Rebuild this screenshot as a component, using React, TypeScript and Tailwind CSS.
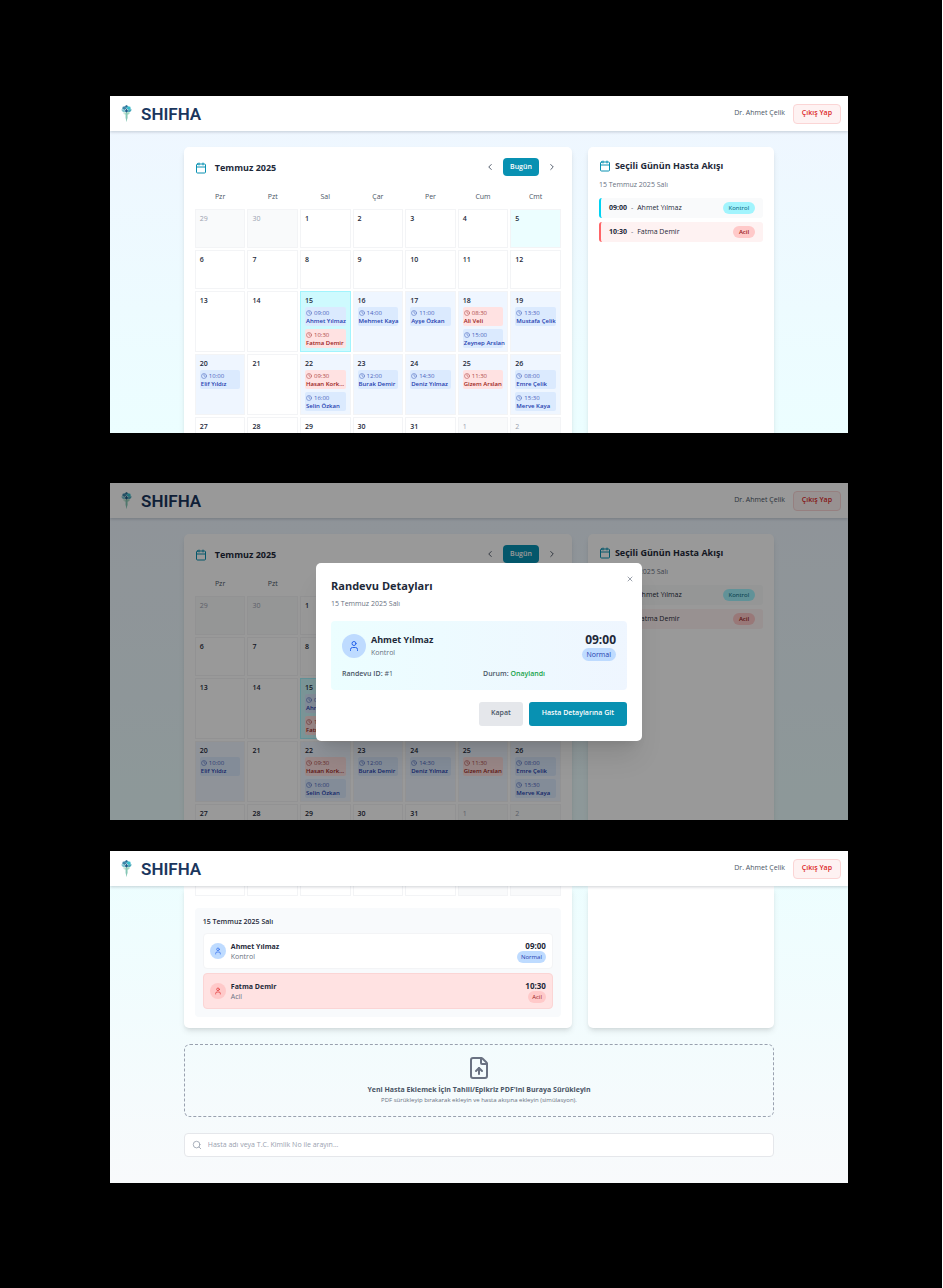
import React from 'react';
import { Calendar as CalendarIcon, ChevronLeft, ChevronRight, Clock, FileUp, Search, User, X } from 'lucide-react';

type Visit = { time: string; name: string; urgent?: boolean };
type Day = { label: string; outside?: boolean; today?: boolean; selected?: boolean; visits?: Visit[] };

const weekdays = ['Pzr', 'Pzt', 'Sal', 'Çar', 'Per', 'Cum', 'Cmt'];

const plain = (...labels: string[]): Day[] => labels.map((label) => ({ label }));

const weeks: { height: string; days: Day[] }[] = [
  {
    height: 'h-[39px]',
    days: [
      { label: '29', outside: true },
      { label: '30', outside: true },
      ...plain('1', '2', '3', '4'),
      { label: '5', today: true },
    ],
  },
  { height: 'h-[39px]', days: plain('6', '7', '8', '9', '10', '11', '12') },
  {
    height: 'h-[61px]',
    days: [
      ...plain('13', '14'),
      {
        label: '15',
        selected: true,
        visits: [
          { time: '09:00', name: 'Ahmet Yılmaz' },
          { time: '10:30', name: 'Fatma Demir', urgent: true },
        ],
      },
      { label: '16', visits: [{ time: '14:00', name: 'Mehmet Kaya' }] },
      { label: '17', visits: [{ time: '11:00', name: 'Ayşe Özkan' }] },
      {
        label: '18',
        visits: [
          { time: '08:30', name: 'Ali Veli', urgent: true },
          { time: '15:00', name: 'Zeynep Arslan' },
        ],
      },
      { label: '19', visits: [{ time: '13:30', name: 'Mustafa Çelik' }] },
    ],
  },
  {
    height: 'h-[61px]',
    days: [
      { label: '20', visits: [{ time: '10:00', name: 'Elif Yıldız' }] },
      { label: '21' },
      {
        label: '22',
        visits: [
          { time: '09:30', name: 'Hasan Kork...', urgent: true },
          { time: '16:00', name: 'Selin Özkan' },
        ],
      },
      { label: '23', visits: [{ time: '12:00', name: 'Burak Demir' }] },
      { label: '24', visits: [{ time: '14:30', name: 'Deniz Yılmaz' }] },
      { label: '25', visits: [{ time: '11:30', name: 'Gizem Arslan', urgent: true }] },
      {
        label: '26',
        visits: [
          { time: '08:00', name: 'Emre Çelik' },
          { time: '15:30', name: 'Merve Kaya' },
        ],
      },
    ],
  },
  {
    height: 'h-[39px]',
    days: [
      ...plain('27', '28', '29', '30', '31'),
      { label: '1', outside: true },
      { label: '2', outside: true },
    ],
  },
];

function Logo() {
  return (
    <svg viewBox="0 0 26 40" className="h-[17px] w-[11px]" aria-hidden="true">
      <path d="M13 0l4 3-4 4-4-4z" fill="#2a6f97" />
      <path d="M4 4l6-1 3 5-5 4-5-3z" fill="#3c86a8" />
      <path d="M22 4l-6-1-3 5 5 4 5-3z" fill="#35bccc" />
      <path d="M1 10l6 0 4 5-5 2-4-3z" fill="#7cc4d0" />
      <path d="M25 10l-6 0-4 5 5 2 4-3z" fill="#46a7b9" />
      <path d="M13 8l4 6-4 5-4-5z" fill="#1d5b87" />
      <path d="M5 18l6-2 1 7-5-1z" fill="#c6e6d4" />
      <path d="M21 18l-6-2-1 7 5-1z" fill="#a3d8c0" />
      <path d="M11 20l2-3 2 3v10l-2 10-2-10z" fill="#6bb8ac" />
      <path d="M13 17l2 3v10l-2 10z" fill="#a2d6bd" />
    </svg>
  );
}

function Header() {
  return (
    <header className="relative z-10 flex h-[35px] shrink-0 items-center justify-between bg-white pr-[7px] pl-[11px] shadow-[0_1px_3px_rgba(15,23,42,0.2)]">
      <div className="flex items-center gap-[9px]">
        <Logo />
        <span className="font-['Roboto',sans-serif] text-[17px] leading-6 font-semibold text-[#1a365d]">SHIFHA</span>
      </div>
      <div className="flex items-center gap-2">
        <span className="text-[7px] text-gray-600">Dr. Ahmet Çelik</span>
        <button className="h-5 rounded-[4px] border border-[#fbd5d5] bg-red-50 px-2 text-[7px] font-semibold text-[#dc2626]">
          Çıkış Yap
        </button>
      </div>
    </header>
  );
}

function VisitChip({ visit }: { visit: Visit }) {
  const tone = visit.urgent ? 'bg-red-100 text-[#991b1b]' : 'bg-blue-100 text-[#1e40af]';
  return (
    <button className={`block w-full rounded-[2px] px-px pt-[2px] pb-px text-left text-[6px] leading-2 ${tone}`}>
      <span className="flex items-center gap-[2px] opacity-80">
        <Clock className="size-[6px]" />
        {visit.time}
      </span>
      <span className="block font-semibold whitespace-nowrap">{visit.name}</span>
    </button>
  );
}

function DayCell({ day, height }: { day: Day; height: string }) {
  let tone = 'border-gray-100 bg-white text-gray-800';
  if (day.outside) tone = 'border-gray-100 bg-gray-50 text-gray-400';
  else if (day.selected) tone = 'border-cyan-200 bg-cyan-100 text-gray-800';
  else if (day.today) tone = 'border-gray-100 bg-cyan-50 text-gray-800';
  else if (day.visits) tone = 'border-gray-100 bg-blue-50 text-gray-800';
  return (
    <div className={`min-w-0 border px-1 pt-1 ${height} ${tone}`}>
      <div className={`text-[7px] leading-[10px] ${day.outside ? '' : 'font-semibold'}`}>{day.label}</div>
      <div className="mt-px flex flex-col gap-[3px]">
        {day.visits?.map((visit) => (
          <VisitChip key={visit.time} visit={visit} />
        ))}
      </div>
    </div>
  );
}

function MonthGrid() {
  return (
    <div className="grid grid-cols-7 gap-0.5">
      {weeks.map((week, w) =>
        week.days.map((day, d) => <DayCell key={`${w}-${d}`} day={day} height={week.height} />),
      )}
    </div>
  );
}

function CalendarCard() {
  return (
    <section className="min-w-0 rounded-[5px] bg-white p-[11px] shadow-md">
      <div className="flex h-[18px] items-center justify-between">
        <h2 className="flex items-center gap-2 pt-0.5 text-[9px] leading-4 font-bold text-gray-800">
          <CalendarIcon className="size-3 text-[#0891b2]" />
          Temmuz 2025
        </h2>
        <div className="flex items-center gap-1">
          <button className="flex size-[18px] items-center justify-center text-gray-700" aria-label="Önceki ay">
            <ChevronLeft className="size-[10px]" />
          </button>
          <button className="h-[18px] rounded-[4px] bg-[#0891b2] px-[7px] text-[7px] font-semibold text-white">
            Bugün
          </button>
          <button className="flex size-[18px] items-center justify-center text-gray-700" aria-label="Sonraki ay">
            <ChevronRight className="size-[10px]" />
          </button>
        </div>
      </div>
      <div className="mt-4 mb-[7px] grid grid-cols-7 gap-0.5 text-center text-[7px] leading-[10px] font-medium text-gray-600">
        {weekdays.map((name) => (
          <span key={name}>{name}</span>
        ))}
      </div>
      <MonthGrid />
    </section>
  );
}

function FlowCard() {
  return (
    <section className="rounded-[5px] bg-white px-[11px] py-3 shadow-md">
      <h2 className="flex items-center gap-1 text-[9px] leading-[14px] font-bold text-gray-800">
        <CalendarIcon className="size-3 text-[#0891b2]" />
        Seçili Günün Hasta Akışı
      </h2>
      <p className="mt-[7px] text-[7px] leading-[10px] text-gray-500">15 Temmuz 2025 Salı</p>
      <ul className="mt-2 flex flex-col gap-1 text-[7px] text-gray-800">
        <li className="flex h-5 items-center rounded-[3px] border-l-2 border-cyan-400 bg-gray-50 px-2">
          <b className="font-bold">09:00</b>
          <span className="px-1 text-gray-500">-</span>
          <span className="grow font-medium">Ahmet Yılmaz</span>
          <span className="rounded-full bg-cyan-200 px-1.5 text-[6px] leading-3 font-medium text-cyan-800">Kontrol</span>
        </li>
        <li className="flex h-5 items-center rounded-[3px] border-l-2 border-red-400 bg-red-50 px-2">
          <b className="font-bold">10:30</b>
          <span className="px-1 text-gray-500">-</span>
          <span className="grow font-medium">Fatma Demir</span>
          <span className="rounded-full bg-red-200 px-1.5 text-[6px] leading-3 font-semibold text-[#991b1b]">Acil</span>
        </li>
      </ul>
    </section>
  );
}

function Overview() {
  return (
    <>
      <Header />
      <main className="mx-[10%] mt-4 grid grid-cols-[25fr_12fr] gap-4">
        <CalendarCard />
        <FlowCard />
      </main>
    </>
  );
}

function AppointmentDialog() {
  return (
    <div className="absolute inset-0 z-20 flex items-center justify-center bg-black/40">
      <div
        role="dialog"
        aria-label="Randevu Detayları"
        className="relative w-[326px] rounded-[5px] bg-white p-[15px] shadow-xl"
      >
        <button className="absolute top-3 right-2 text-gray-500" aria-label="Kapat">
          <X className="size-2" />
        </button>
        <h2 className="text-[11px] leading-4 font-bold text-gray-800">Randevu Detayları</h2>
        <p className="mt-1 text-[7px] leading-3 text-gray-500">15 Temmuz 2025 Salı</p>
        <div className="mt-[11px] rounded-[4px] bg-linear-to-r from-cyan-50 to-blue-50 px-[11px] py-[11px]">
          <div className="flex items-center justify-between">
            <div className="flex items-center gap-[5px]">
              <span className="flex size-6 items-center justify-center rounded-full bg-blue-200 text-[#2563eb]">
                <User className="size-3" />
              </span>
              <div>
                <p className="text-[9px] leading-[14px] font-bold text-gray-800">Ahmet Yılmaz</p>
                <p className="text-[7px] leading-3 text-gray-500">Kontrol</p>
              </div>
            </div>
            <div className="flex flex-col items-end">
              <p className="text-[12px] leading-4 font-bold text-gray-800">09:00</p>
              <span className="rounded-full bg-blue-200 px-[5px] text-[7px] leading-[13px] font-medium text-[#1e40af]">
                Normal
              </span>
            </div>
          </div>
          <div className="mt-2 grid grid-cols-2 gap-2 text-[7px] leading-[10px] text-gray-600">
            <p>
              <span className="font-semibold">Randevu ID:</span> #1
            </p>
            <p>
              <span className="font-semibold">Durum:</span>{' '}
              <span className="font-semibold text-[#16a34a]">Onaylandı</span>
            </p>
          </div>
        </div>
        <div className="mt-3 flex justify-end gap-1.5 text-[7px] font-semibold">
          <button className="h-6 rounded-[3px] bg-gray-200 px-3 text-gray-600">Kapat</button>
          <button className="h-6 rounded-[3px] bg-[#0891b2] px-[13px] text-white">Hasta Detaylarına Git</button>
        </div>
      </div>
    </div>
  );
}

function PatientRow({ name, kind, time, badge, urgent }: { name: string; kind: string; time: string; badge: string; urgent?: boolean }) {
  return (
    <li
      className={`flex h-9 items-center rounded-[4px] border px-1.5 ${urgent ? 'border-[#fbd5d5] bg-red-100' : 'border-gray-100 bg-white'}`}
    >
      <span
        className={`flex size-4 items-center justify-center rounded-full ${urgent ? 'bg-red-200 text-[#dc2626]' : 'bg-blue-200 text-[#2563eb]'}`}
      >
        <User className="size-2" />
      </span>
      <div className="ml-[5px] grow">
        <p className="text-[7px] leading-[11px] font-bold text-gray-800">{name}</p>
        <p className="text-[7px] leading-[10px] text-gray-500">{kind}</p>
      </div>
      <div className="flex flex-col items-end">
        <p className="text-[8px] leading-[11px] font-bold text-gray-800">{time}</p>
        <span
          className={`rounded-full px-1 text-[6px] leading-3 font-medium ${urgent ? 'bg-red-200 text-[#991b1b]' : 'bg-blue-200 text-[#1e40af]'}`}
        >
          {badge}
        </span>
      </div>
    </li>
  );
}

function ScrolledView() {
  return (
    <>
      <Header />
      <main className="mx-[10%] pb-[26px]">
        <div className="grid grid-cols-[25fr_12fr] gap-4">
          <section className="min-w-0 rounded-b-[5px] bg-white px-[11px] pb-[11px] shadow-md">
            <div className="grid grid-cols-7 gap-0.5">
              {weeks[4].days.map((day) => (
                <div
                  key={day.label}
                  className={`h-[10px] border border-t-0 border-gray-100 ${day.outside ? 'bg-gray-50' : 'bg-white'}`}
                />
              ))}
            </div>
            <div className="mt-3 rounded-[4px] bg-slate-50 p-2">
              <h3 className="mt-px mb-1.5 text-[7px] leading-[10px] font-semibold text-gray-800">15 Temmuz 2025 Salı</h3>
              <ul className="flex flex-col gap-1">
                <PatientRow name="Ahmet Yılmaz" kind="Kontrol" time="09:00" badge="Normal" />
                <PatientRow name="Fatma Demir" kind="Acil" time="10:30" badge="Acil" urgent />
              </ul>
            </div>
          </section>
          <section className="rounded-b-[5px] bg-white shadow-md" />
        </div>
        <div className="mt-4 flex flex-col items-center rounded-[6px] border border-dashed border-gray-400 pt-[11px] pb-[11px] text-center">
          <FileUp className="size-6 text-gray-500" />
          <p className="mt-[5px] text-[7px] leading-[10px] font-bold text-gray-600">
            Yeni Hasta Eklemek İçin Tahlil/Epikriz PDF&apos;ini Buraya Sürükleyin
          </p>
          <p className="text-[6px] leading-[10px] text-gray-500">
            PDF sürükleyip bırakarak ekleyin ve hasta akışına ekleyin (simülasyon).
          </p>
        </div>
        <label className="mt-4 flex h-6 items-center gap-1.5 rounded-[4px] border border-gray-200 bg-white px-[7px]">
          <Search className="size-[10px] text-gray-400" aria-hidden="true" />
          <input
            type="search"
            aria-label="Hasta ara"
            placeholder="Hasta adı veya T.C. Kimlik No ile arayın..."
            className="min-w-0 grow text-[7px] leading-3 outline-none placeholder:text-gray-400"
          />
        </label>
      </main>
    </>
  );
}

export default function App() {
  return (
    <div className="min-h-screen border-r border-white bg-black pt-24 pr-[94px] pb-[104px] pl-[110px] font-['Open_Sans','Noto_Sans',sans-serif]">
      <div className="relative h-[337px] overflow-hidden bg-linear-to-b from-blue-50 to-cyan-50">
        <Overview />
      </div>
      <div className="relative mt-[50px] h-[337px] overflow-hidden bg-linear-to-b from-blue-50 to-cyan-50">
        <Overview />
        <AppointmentDialog />
      </div>
      <div className="relative mt-[31px] overflow-hidden bg-linear-to-b from-cyan-50 to-slate-50">
        <ScrolledView />
      </div>
    </div>
  );
}
